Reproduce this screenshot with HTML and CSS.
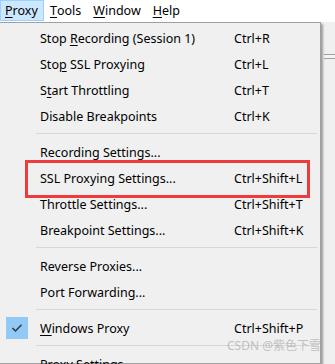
FILE: index.html
```html
<!DOCTYPE html>
<html>
<head>
    <meta charset="UTF-8">
    <title>Proxy menu</title>
    <link rel="stylesheet" href="styles.css">
</head>
<body>
    <div class="menubar">
        <span class="top open"><u>P</u>roxy</span>
        <span class="top"><u>T</u>ools</span>
        <span class="top"><u>W</u>indow</span>
        <span class="top"><u>H</u>elp</span>
    </div>
    <div class="below">
        <div class="menu">
            <div class="item"><span class="gut"></span><span class="label">Stop <u>R</u>ecording (Session 1)</span><span class="key">Ctrl+R</span></div>
            <div class="item"><span class="gut"></span><span class="label">Sto<u>p</u> SSL Proxying</span><span class="key">Ctrl+L</span></div>
            <div class="item"><span class="gut"></span><span class="label">S<u>t</u>art Throttling</span><span class="key">Ctrl+T</span></div>
            <div class="item"><span class="gut"></span><span class="label">Disable Breakpoints</span><span class="key">Ctrl+K</span></div>
            <div class="sep"></div>
            <div class="item"><span class="gut"></span><span class="label">Recording Settings...</span><span class="key"></span></div>
            <div class="item marked"><span class="gut"></span><span class="label">SSL Proxying Settings...</span><span class="key">Ctrl+Shift+L</span></div>
            <div class="item"><span class="gut"></span><span class="label">Throttle Settings...</span><span class="key">Ctrl+Shift+T</span></div>
            <div class="item"><span class="gut"></span><span class="label">Breakpoint Settings...</span><span class="key">Ctrl+Shift+K</span></div>
            <div class="sep"></div>
            <div class="item"><span class="gut"></span><span class="label">Reverse Proxies...</span><span class="key"></span></div>
            <div class="item"><span class="gut"></span><span class="label">Port Forwarding...</span><span class="key"></span></div>
            <div class="sep"></div>
            <div class="item"><span class="gut"><span class="check"><svg width="12" height="10" viewBox="0 0 12 10"><path d="M1.5 5.2 L4.5 8 L10.5 1.8" fill="none" stroke="#3a3a3a" stroke-width="1.6"/></svg></span></span><span class="label"><u>W</u>indows Proxy</span><span class="key">Ctrl+Shift+P</span></div>
            <div class="sep"></div>
            <div class="item"><span class="gut"></span><span class="label">Proxy Settings...</span><span class="key"></span></div>
        </div>
        <div class="behind"></div>
        <div class="mark">CSDN @紫色下雪</div>
    </div>
</body>
</html>
```

FILE: styles.css
```css
body {
    margin: 0;
    background: #f0f0f0;
    font-family: 'Noto Sans', 'Noto Sans CJK SC', sans-serif;
    font-size: 12.5px;
    color: #000000;
    overflow: hidden;
}

u {
    text-decoration: underline;
    text-underline-offset: 2px;
}

.menubar {
    display: flex;
    height: 22px;
    background: #ffffff;
}

.top {
    display: flex;
    align-items: center;
    padding: 0 6px 1px 6px;
    height: 21px;
    box-sizing: border-box;
}

.top.open {
    background: #cce8ff;
    border: 1px solid #99d1ff;
    padding-left: 4px;
    width: 44px;
}

.below {
    position: relative;
    display: flex;
    height: 342px;
}

.menu {
    width: 320px;
    border: 1px solid #a0a0a0;
    border-left: none;
    background: #f0f0f0;
    padding-top: 2px;
    box-shadow: 2px 2px 2px rgba(0, 0, 0, 0.35);
    position: relative;
    z-index: 1;
}

.item {
    display: flex;
    align-items: center;
    height: 26px;
    position: relative;
}

.gut {
    width: 40px;
    display: flex;
    justify-content: center;
    padding-left: 2px;
    box-sizing: border-box;
}

.label {
    width: 194px;
    white-space: nowrap;
}

.key {
    white-space: nowrap;
}

.check {
    display: flex;
    align-items: center;
    justify-content: center;
    width: 22px;
    height: 22px;
    margin-left: -8px;
    background: #91c9f7;
}

.sep {
    height: 10px;
    box-sizing: border-box;
    padding-top: 4px;
    margin-left: 36px;
    margin-right: 3px;
}

.sep::before {
    content: "";
    display: block;
    height: 1px;
    background: #d7d7d7;
}

.marked::after {
    content: "";
    position: absolute;
    left: 25px;
    right: 10px;
    top: -5px;
    bottom: -7px;
    border: 3px solid #ee3b3b;
}

.behind {
    flex: 1;
    margin-left: 3px;
    background: #f4f4f4;
    border-top: 1px solid #a0a0a0;
    margin-top: 32px;
    height: 3px;
    border-bottom: 1px solid #a0a0a0;
}

.mark {
    position: absolute;
    right: 14px;
    bottom: 11px;
    z-index: 2;
    line-height: 14px;
    color: rgba(150, 150, 150, 0.55);
    font-size: 12px;
}
```
